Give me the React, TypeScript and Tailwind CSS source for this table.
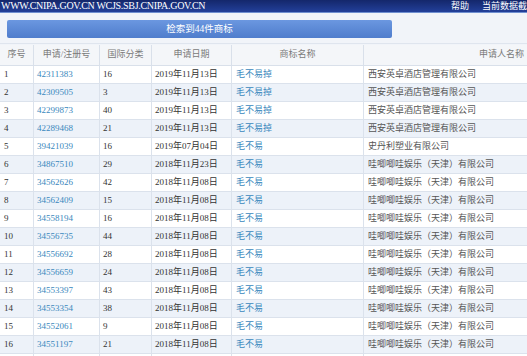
const rows: [string, string, string, string, string, string][] = [
  ['1', '42311383', '16', '2019年11月13日', '毛不易掉', '西安英卓酒店管理有限公司'],
  ['2', '42309505', '3', '2019年11月13日', '毛不易掉', '西安英卓酒店管理有限公司'],
  ['3', '42299873', '40', '2019年11月13日', '毛不易掉', '西安英卓酒店管理有限公司'],
  ['4', '42289468', '21', '2019年11月13日', '毛不易掉', '西安英卓酒店管理有限公司'],
  ['5', '39421039', '16', '2019年07月04日', '毛不易', '史丹利塑业有限公司'],
  ['6', '34867510', '29', '2018年11月23日', '毛不易', '哇唧唧哇娱乐（天津）有限公司'],
  ['7', '34562626', '42', '2018年11月08日', '毛不易', '哇唧唧哇娱乐（天津）有限公司'],
  ['8', '34562409', '15', '2018年11月08日', '毛不易', '哇唧唧哇娱乐（天津）有限公司'],
  ['9', '34558194', '16', '2018年11月08日', '毛不易', '哇唧唧哇娱乐（天津）有限公司'],
  ['10', '34556735', '44', '2018年11月08日', '毛不易', '哇唧唧哇娱乐（天津）有限公司'],
  ['11', '34556692', '28', '2018年11月08日', '毛不易', '哇唧唧哇娱乐（天津）有限公司'],
  ['12', '34556659', '24', '2018年11月08日', '毛不易', '哇唧唧哇娱乐（天津）有限公司'],
  ['13', '34553397', '43', '2018年11月08日', '毛不易', '哇唧唧哇娱乐（天津）有限公司'],
  ['14', '34553354', '38', '2018年11月08日', '毛不易', '哇唧唧哇娱乐（天津）有限公司'],
  ['15', '34552061', '9', '2018年11月08日', '毛不易', '哇唧唧哇娱乐（天津）有限公司'],
  ['16', '34551197', '21', '2018年11月08日', '毛不易', '哇唧唧哇娱乐（天津）有限公司'],
];

const headers = ['序号', '申请/注册号', '国际分类', '申请日期', '商标名称', '申请人名称'];

const grid = 'grid grid-cols-[34px_66px_52px_80px_132px_276px]';
const cell = 'flex items-center border-r border-[#dbe2ec]';

export default function App() {
  return (
    <div className="w-[527px] h-[356px] overflow-hidden bg-[#f1f4f9] font-['Liberation_Serif','Noto_Sans_CJK_SC',serif] text-[9px] text-[#333]">
      {/* top bar */}
      <div className="h-[13px] flex items-center justify-between bg-gradient-to-b from-[#14276b] to-[#23409a] border-b border-[#6f8fd0] text-white whitespace-nowrap">
        <span className="pl-[1px] text-[10px] leading-none tracking-[-0.3px]">
          WWW.CNIPA.GOV.CN WCJS.SBJ.CNIPA.GOV.CN
        </span>
        <span className="flex gap-[13px] leading-none">
          <span>帮助</span>
          <span>当前数据截</span>
        </span>
      </div>

      {/* result banner */}
      <div className="px-[7px] pt-[7px] pb-[5px]">
        <div className="w-[385px] h-[18px] rounded-[2px] bg-gradient-to-b from-[#6b97e0] to-[#4f7dcc] flex items-center justify-center text-white text-[9.5px]">
          检索到44件商标
        </div>
      </div>

      <div className="w-[640px] border-t border-[#dfe5ee]">
        <div className={`${grid} h-[21px] mt-[1px] bg-[#f4f6f9] text-[#7a7a7a] border-b border-[#d9e0ea]`}>
          {headers.map((h) => (
            <div key={h} className="flex items-center justify-center border-r border-[#d9e0ea]">
              {h}
            </div>
          ))}
        </div>
        {rows.map((r, i) => (
          <div
            key={r[0]}
            className={`${grid} h-[18px] border-b border-[#dbe2ec] ${i % 2 === 0 ? 'bg-white' : 'bg-[#edf2f9]'}`}
          >
            <div className={`${cell} pl-[4px]`}>{r[0]}</div>
            <div className={`${cell} pl-[3px] text-[#3a88bd]`}>{r[1]}</div>
            <div className={`${cell} pl-[3px]`}>{r[2]}</div>
            <div className={`${cell} pl-[3px]`}>{r[3]}</div>
            <div className={`${cell} pl-[4px] text-[#3a88bd]`}>{r[4]}</div>
            <div className={`${cell} pl-[4px] text-[#555]`}>{r[5]}</div>
          </div>
        ))}
        {/* next row, cut by the window edge */}
        <div className={`${grid} h-[18px] bg-white`}>
          {headers.map((h) => (
            <div key={h} className={cell} />
          ))}
        </div>
      </div>
    </div>
  );
}
